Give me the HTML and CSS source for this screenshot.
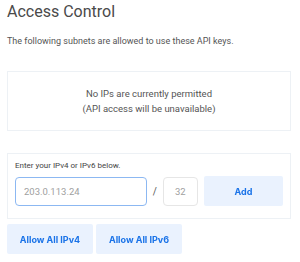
FILE: index.html
```html
<!DOCTYPE html>
<html lang="en">
<head>
  <title>Access Control</title>
  <meta charset="utf-8">
  <meta name="viewport" content="width=device-width, initial-scale=1">
  <link rel="stylesheet" href="styles.css">
</head>
<body>
  <div class="page">
    <h1 class="title">Access Control</h1>
    <p class="intro">The following subnets are allowed to use these API keys.</p>

    <div class="panel empty-panel">
      <div>No IPs are currently permitted</div>
      <div>(API access will be unavailable)</div>
    </div>

    <div class="panel form-panel">
      <div class="hint">Enter your IPv4 or IPv6 below.</div>
      <div class="form-row">
        <input class="ip-input" type="text" placeholder="203.0.113.24" autofocus>
        <span class="slash">/</span>
        <input class="mask-input" type="text" placeholder="32">
        <button class="btn btn-add">Add</button>
      </div>
    </div>

    <div class="quick-row">
      <button class="btn btn-quick">Allow All IPv4</button>
      <button class="btn btn-quick">Allow All IPv6</button>
    </div>
  </div>
</body>
</html>
```

FILE: styles.css
```css
    body {
      margin: 0;
      background: #ffffff;
      font-family: Roboto, "Liberation Sans", Arial, sans-serif;
      color: #555555;
    }

    .page {
      padding: 2px 9px 0 7px;
    }

    .title {
      margin: 0;
      font-size: 16px;
      font-weight: 400;
      line-height: 20px;
      color: #4a4a4a;
    }

    .intro {
      margin: 13px 0 0 0;
      font-size: 9px;
      line-height: 12px;
      color: #555555;
    }

    .panel {
      border: 1px solid #edf1f5;
      background: #ffffff;
    }

    .empty-panel {
      margin-top: 24px;
      height: 58px;
      display: flex;
      flex-direction: column;
      justify-content: center;
      align-items: center;
      font-size: 9.5px;
      line-height: 15px;
      color: #555555;
    }

    .form-panel {
      margin-top: 22px;
      padding: 7px 7px 12px 7px;
    }

    .hint {
      font-size: 8px;
      line-height: 10px;
      color: #444444;
      margin-bottom: 5px;
    }

    .form-row {
      display: flex;
      align-items: center;
    }

    .ip-input {
      box-sizing: border-box;
      width: 132px;
      height: 29px;
      border: 1px solid #8cb8f2;
      border-radius: 4px;
      padding: 0 8px;
      font-family: Roboto, "Liberation Sans", Arial, sans-serif;
      font-size: 9.5px;
      outline: none;
    }

    .ip-input::placeholder,
    .mask-input::placeholder {
      color: #a0a0a0;
    }

    .slash {
      width: 16px;
      text-align: center;
      font-size: 10px;
      color: #555555;
    }

    .mask-input {
      box-sizing: border-box;
      width: 35px;
      height: 29px;
      border: 1px solid #e6e6e6;
      border-radius: 4px;
      text-align: center;
      font-family: Roboto, "Liberation Sans", Arial, sans-serif;
      font-size: 9.5px;
      outline: none;
    }

    .btn {
      border: none;
      border-radius: 2px;
      background: #eaf2fe;
      color: #1a73e8;
      font-family: Inter, Roboto, "Liberation Sans", sans-serif;
      font-weight: 700;
      font-size: 9px;
      cursor: pointer;
    }

    .btn-add {
      margin-left: 6px;
      width: 80px;
      height: 30px;
    }

    .quick-row {
      display: flex;
      gap: 3px;
      margin-top: 5px;
    }

    .btn-quick {
      width: 86px;
      height: 30px;
    }
```
